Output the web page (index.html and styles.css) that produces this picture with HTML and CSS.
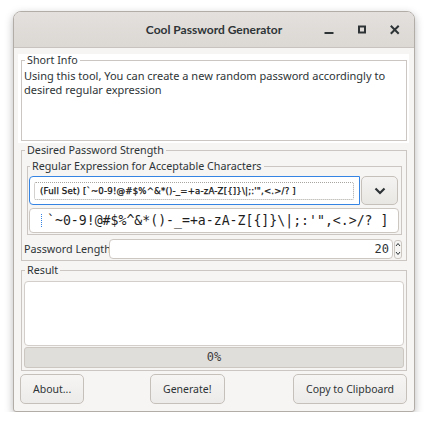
FILE: index.html
```html
<!DOCTYPE html>
<html>
<head>
<meta charset="utf-8">
<title>Cool Password Generator</title>
<link rel="stylesheet" href="styles.css">
</head>
<body>
<div class="window">
  <div class="titlebar">
    <div class="title">Cool Password Generator</div>
    <div class="controls">
      <span class="ctl"><svg width="24" height="24" viewBox="0 0 24 24"><rect x="7.5" y="14" width="9" height="2" fill="#2e3436"/></svg></span>
      <span class="ctl"><svg width="24" height="24" viewBox="0 0 24 24"><rect x="9" y="8.5" width="6" height="6" fill="none" stroke="#2e3436" stroke-width="2"/></svg></span>
      <span class="ctl"><svg width="24" height="24" viewBox="0 0 24 24"><path d="M8.5 8.5 L15 15 M15 8.5 L8.5 15" stroke="#2e3436" stroke-width="2" stroke-linecap="square" fill="none"/></svg></span>
    </div>
  </div>
  <div class="content">
    <div class="info-wrap">
      <fieldset class="group info">
        <legend>Short Info</legend>
        <p>Using this tool, You can create a new random password accordingly to desired regular expression</p>
      </fieldset>
    </div>
    <fieldset class="group strength">
      <legend>Desired Password Strength</legend>
      <fieldset class="group regex">
        <legend>Regular Expression for Acceptable Characters</legend>
        <div class="combo-row">
          <div class="combo"><div class="combo-focus">(Full Set) [`~0-9!@#$%^&amp;*()-_=+a-zA-Z[{]}\|;:'",&lt;.&gt;/? ]</div></div>
          <button class="drop"><svg width="12" height="8" viewBox="0 0 12 8"><path d="M1.5 1.5 L6 6 L10.5 1.5" fill="none" stroke="#2e3436" stroke-width="2.2"/></svg></button>
        </div>
        <div class="lineedit"><span class="caret"></span><span class="mono-text">`~0-9!@#$%^&amp;*()-_=+a-zA-Z[{]}\|;:'",&lt;.&gt;/? ]</span></div>
      </fieldset>
      <div class="length-row">
        <span class="length-label">Password Length</span>
        <div class="spin">20</div>
        <div class="spin-arrows">
          <svg width="8" height="18" viewBox="0 0 8 18"><path d="M2 6 L4 3.5 L6 6" fill="none" stroke="#2e3436" stroke-width="1"/><path d="M2 12 L4 14.5 L6 12" fill="none" stroke="#2e3436" stroke-width="1"/></svg>
        </div>
      </div>
    </fieldset>
    <fieldset class="group result">
      <legend>Result</legend>
      <div class="result-box"></div>
      <div class="progress">0%</div>
    </fieldset>
    <div class="buttons">
      <button class="btn start">About...</button>
      <button class="btn start">Generate!</button>
      <button class="btn end">Copy to Clipboard</button>
    </div>
  </div>
</div>
</body>
</html>
```
FILE: styles.css
```css
* { box-sizing: border-box; }
html, body { margin: 0; padding: 0; background: #ffffff; }
body {
  font-family: "Noto Sans", sans-serif;
  font-size: 11px;
  color: #2e3436;
  padding: 11px 0 0 13px;
}
.window {
  width: 402px;
  height: 401px;
  border: 1px solid #b3ada7;
  border-radius: 8px 8px 3px 3px;
  background: #f6f5f4;
  box-shadow: 0 3px 8px rgba(0,0,0,0.28);
  overflow: hidden;
  display: flex;
  flex-direction: column;
}
.titlebar {
  flex: none;
  height: 36px;
  display: grid;
  grid-template-columns: 1fr auto 1fr;
  align-items: center;
  background: linear-gradient(#e3e0dd, #dcd8d4);
  border-bottom: 1px solid #c8c3be;
}
.title {
  grid-column: 2;
  font-family: Lato, "Noto Sans", sans-serif;
  font-weight: bold;
  font-size: 12px;
  color: #2e3436;
}
.controls {
  grid-column: 3;
  justify-self: end;
  display: flex;
  gap: 9px;
  padding-right: 7px;
}
.ctl { width: 24px; height: 24px; display: block; }
.ctl svg { display: block; }

.content {
  flex: 1;
  display: flex;
  flex-direction: column;
  padding: 6px 5px 7px 4px;
}
fieldset {
  margin: 0;
  border: 1px solid #cbc6c1;
  min-width: 0;
}
legend {
  padding: 0 2px;
  margin-left: 1px;
  font-size: 10.75px;
  line-height: 13px;
}
.info-wrap {
  background: #ffffff;
  padding: 0 2px 2px 3px;
}
.info { padding: 2px 2px 0 2px; }
.info p {
  margin: 0;
  height: 71px;
  line-height: 14px;
}
.strength {
  margin: 1px 2px 0 3px;
  padding: 3px 4px 1px 2px;
}
.regex {
  margin: 0 0 0 3px;
  padding: 3px 2px 1px 1px;
}
.combo-row {
  display: flex;
  height: 29px;
  gap: 1px;
  margin-right: 1px;
}
.combo {
  flex: 1;
  background: #ffffff;
  border: 1px solid #3584e4;
  border-radius: 4px 0 0 4px;
  padding: 5px 5px 4px 4px;
}
.combo-focus {
  height: 100%;
  border: 1px dotted #a8a4a0;
  border-radius: 2px;
  font-family: "DejaVu Sans", sans-serif;
  font-size: 8.6px;
  font-weight: normal;
  letter-spacing: 0.18px;
  line-height: 16px;
  padding-left: 5px;
  white-space: nowrap;
  overflow: hidden;
  color: #111111;
  -webkit-text-stroke: 0.25px #111111;
}
.drop {
  width: 37px;
  height: 29px;
  border: 1px solid #c6c0ba;
  border-radius: 5px;
  background: linear-gradient(#f4f3f1, #e9e7e4);
  display: flex;
  align-items: center;
  justify-content: center;
  padding: 0;
}
.drop svg { display: block; }
.lineedit {
  margin-top: 3px;
  height: 25px;
  background: #ffffff;
  border: 1px solid #cdc7c2;
  border-radius: 4px;
  display: flex;
  align-items: center;
  padding-left: 11px;
  font-family: "DejaVu Sans Mono", monospace;
  font-size: 13.2px;
  color: #1e1e1e;
  white-space: nowrap;
  overflow: hidden;
}
.caret {
  width: 1px;
  height: 13px;
  border-left: 1px dotted #3584e4;
  margin-right: 5px;
}
.length-row {
  margin-top: 4px;
  height: 20px;
  display: flex;
  align-items: center;
}
.length-label { flex: none; width: 85px; white-space: nowrap; font-size: 10.75px; }
.spin {
  flex: 1;
  height: 20px;
  background: #ffffff;
  border: 1px solid #cdc7c2;
  border-radius: 4px;
  text-align: right;
  padding-right: 3px;
  font-family: "DejaVu Sans Mono", monospace;
  font-size: 12px;
  line-height: 18px;
}
.spin-arrows {
  flex: none;
  width: 8px;
  height: 19px;
  margin-left: 1px;
  border: 1px solid #cdc7c2;
  border-radius: 3px;
  background: #f6f5f4;
  display: flex;
  align-items: center;
  justify-content: center;
}
.spin-arrows svg { display: block; flex: none; }
.result {
  margin: 3px 2px 0 3px;
  padding: 4px 2px 2px 2px;
}
.result-box {
  height: 65px;
  background: #ffffff;
  border: 1px solid #d3cec9;
  border-radius: 4px;
}
.progress {
  margin-top: 1px;
  height: 21px;
  background: #e0dedb;
  border: 1px solid #cdc7c2;
  border-radius: 3px;
  text-align: center;
  font-family: "DejaVu Sans Mono", monospace;
  font-size: 12px;
  line-height: 19px;
  color: #3d3d3d;
}
.buttons {
  margin: 3px 2px 0 2px;
  display: grid;
  grid-template-columns: repeat(3, 1fr);
  gap: 3px;
}
.btn {
  height: 30px;
  padding: 0 12px;
  border: 1px solid #c6c0ba;
  border-radius: 5px;
  background: linear-gradient(#f6f5f4, #edebe9);
  font-family: "Noto Sans", sans-serif;
  font-size: 10.5px;
  color: #2e3436;
}
.btn.start { justify-self: start; }
.btn.end { justify-self: end; }
```
